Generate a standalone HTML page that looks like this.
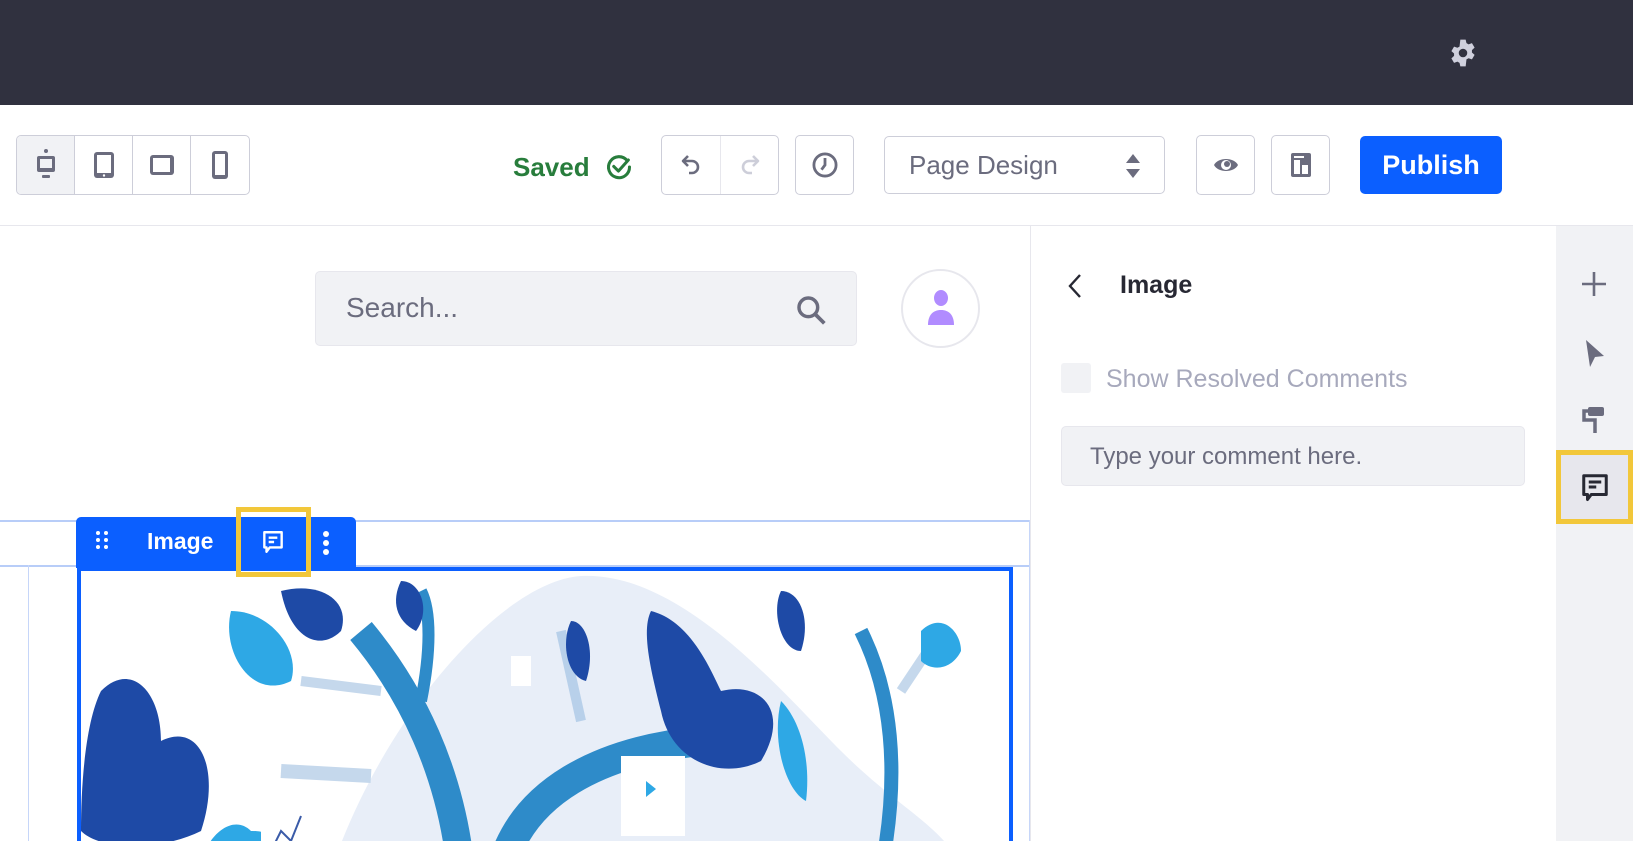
<!DOCTYPE html>
<html style="width:1633px;height:841px;overflow:hidden"><head><style>
*{box-sizing:border-box;margin:0;padding:0}
body{width:1633px;height:841px;overflow:hidden;background:#fff;font-family:"Liberation Sans",sans-serif;position:relative}
.a{position:absolute}
.top{left:0;top:0;width:1633px;height:105px;background:#30313f}
.btn{position:absolute;border:1px solid #cdced9;border-radius:5px;background:#fff;display:flex;align-items:center;justify-content:center}
svg{display:block}
</style></head><body>
<div class="a top"></div>
<svg class="a" style="left:1447px;top:37px" width="32" height="32" viewBox="0 0 24 24"><path fill="#cfd0dd" d="M10 2h4l.6 2.6 1.6.9 2.5-.9 2 3.4-2 1.8v1.8l2 1.8-2 3.4-2.5-.9-1.6.9L14 22h-4l-.6-2.6-1.6-.9-2.5.9-2-3.4 2-1.8v-1.8l-2-1.8 2-3.4 2.5.9 1.6-.9z"/><circle cx="12" cy="12" r="3.2" fill="#30313f"/></svg>

<div class="a" style="left:16px;top:135px;width:234px;height:60px;border:1px solid #cdced9;border-radius:5px;display:flex;overflow:hidden">
 <div style="width:58px;background:#f1f2f5;border-right:1px solid #cdced9;display:flex;align-items:center;justify-content:center"><svg width="24" height="34" viewBox="0 0 24 34"><circle cx="12" cy="3" r="2" fill="#6b6c7e"/><rect x="3" y="8" width="18" height="16" rx="2" fill="#6b6c7e"/><rect x="6" y="11" width="12" height="9" fill="#f1f2f5"/><rect x="8" y="27" width="8" height="3" rx="1" fill="#6b6c7e"/></svg></div>
 <div style="width:58px;border-right:1px solid #cdced9;display:flex;align-items:center;justify-content:center"><svg width="24" height="30" viewBox="0 0 24 30"><rect x="2" y="2" width="20" height="26" rx="3" fill="#6b6c7e"/><rect x="5" y="5" width="14" height="18" fill="#fff"/><circle cx="12" cy="25.5" r="1.2" fill="#fff"/></svg></div>
 <div style="width:58px;border-right:1px solid #cdced9;display:flex;align-items:center;justify-content:center"><svg width="28" height="24" viewBox="0 0 28 24"><rect x="2" y="2" width="24" height="20" rx="3" fill="#6b6c7e"/><rect x="5" y="5" width="17" height="14" fill="#fff"/></svg></div>
 <div style="flex:1;display:flex;align-items:center;justify-content:center"><svg width="20" height="30" viewBox="0 0 20 30"><rect x="2" y="1" width="16" height="28" rx="3" fill="#6b6c7e"/><rect x="5" y="4" width="10" height="21" fill="#fff"/></svg></div>
</div>

<div class="a" style="left:513px;top:152px;font-size:26px;font-weight:bold;color:#287d3c">Saved</div>
<svg class="a" style="left:605px;top:153px" width="28" height="28" viewBox="0 0 24 24"><path d="M19 6.5A9 9 0 1 0 21 12" fill="none" stroke="#287d3c" stroke-width="2.6" stroke-linecap="round"/><path d="M7.5 11.5l4 4L20 6" fill="none" stroke="#287d3c" stroke-width="2.6" stroke-linecap="round" stroke-linejoin="round"/></svg>

<div class="a" style="left:661px;top:135px;width:118px;height:60px;border:1px solid #cdced9;border-radius:5px;display:flex">
 <div style="width:59px;border-right:1px solid #e7e7ed;display:flex;align-items:center;justify-content:center"><svg width="22" height="24" viewBox="0 0 22 24"><path d="M8 3L3 8l5 5M3 8h9a6 6 0 0 1 0 12H9" fill="none" stroke="#6b6c7e" stroke-width="2.6" stroke-linejoin="round"/></svg></div>
 <div style="flex:1;display:flex;align-items:center;justify-content:center"><svg width="22" height="24" viewBox="0 0 22 24"><path d="M14 3l5 5-5 5M19 8h-9a6 6 0 0 0 0 12h3" fill="none" stroke="#cdced9" stroke-width="2.6" stroke-linejoin="round"/></svg></div>
</div>
<div class="btn" style="left:795px;top:135px;width:59px;height:60px"><svg width="28" height="28" viewBox="0 0 24 24"><circle cx="12" cy="12" r="9.5" fill="none" stroke="#6b6c7e" stroke-width="2.4"/><path d="M12 6v6l-3 4" fill="none" stroke="#6b6c7e" stroke-width="2.4"/></svg></div>
<div class="btn" style="left:884px;top:136px;width:281px;height:58px;justify-content:flex-start;padding-left:24px;font-size:26px;color:#6b6c7e">Page Design
 <svg class="a" style="left:240px;top:16px" width="16" height="26" viewBox="0 0 16 26"><path d="M8 1l7 9H1zM8 25l7-9H1z" fill="#6b6c7e"/></svg></div>
<div class="btn" style="left:1196px;top:135px;width:59px;height:60px"><svg width="28" height="22" viewBox="0 0 28 22"><path d="M2 11C6 3 22 3 26 11 22 19 6 19 2 11z" fill="#6b6c7e"/><circle cx="14" cy="11" r="5" fill="#fff"/><circle cx="15" cy="10" r="3" fill="#6b6c7e"/></svg></div>
<div class="btn" style="left:1271px;top:135px;width:59px;height:60px"><svg width="24" height="28" viewBox="0 0 24 28"><rect x="2" y="2" width="20" height="24" rx="2" fill="#6b6c7e"/><rect x="5" y="9" width="6" height="14" fill="#fff"/><rect x="13" y="14" width="6" height="9" fill="#fff"/><rect x="5" y="5" width="10" height="2" fill="#fff"/></svg></div>
<div class="a" style="left:1360px;top:136px;width:142px;height:58px;background:#0b5fff;border-radius:5px;color:#fff;font-size:27px;font-weight:bold;display:flex;align-items:center;justify-content:center">Publish</div>

<div class="a" style="left:0;top:225px;width:1633px;height:1px;background:#e7e7ed"></div>

<div class="a" style="left:315px;top:271px;width:542px;height:75px;background:#f1f2f5;border:1px solid #e7e7ed;border-radius:5px;font-size:28px;color:#6b6c7e;padding:20px 0 0 30px">Search...</div>
<svg class="a" style="left:795px;top:294px" width="32" height="32" viewBox="0 0 24 24"><circle cx="10" cy="10" r="7" fill="none" stroke="#6b6c7e" stroke-width="2.6"/><path d="M15 15l7 7" stroke="#6b6c7e" stroke-width="2.8"/></svg>
<div class="a" style="left:901px;top:269px;width:79px;height:79px;border-radius:50%;border:2px solid #e7e7ed;background:#fff"></div>
<svg class="a" style="left:925px;top:289px" width="32" height="40" viewBox="0 0 32 40"><ellipse cx="16" cy="9" rx="7" ry="8" fill="#b18cff"/><path d="M3 36c0-10 5-15 13-15s13 5 13 15z" fill="#b18cff"/></svg>

<div class="a" style="left:0;top:520px;width:1030px;height:2px;background:#b8cdf8"></div>
<div class="a" style="left:0;top:565px;width:1030px;height:2px;background:#b8cdf8"></div>
<div class="a" style="left:28px;top:565px;width:1px;height:276px;background:#c6d6f9"></div>
<div class="a" style="left:1029px;top:520px;width:1px;height:321px;background:#c6d6f9"></div>

<div class="a" style="left:77px;top:567px;width:936px;height:274px;border:4px solid #0b5fff;border-bottom:none;overflow:hidden;background:#fff">
<svg width="928" height="280" viewBox="0 0 928 280">
 <path d="M250 300C300 150 420 10 500 5 600 0 700 120 760 180 820 240 870 260 880 300z" fill="#e8eef8"/>
 <path d="M380 300C370 200 330 120 280 60" fill="none" stroke="#2e8bc9" stroke-width="28"/>
 <path d="M420 300C440 220 520 180 620 170" fill="none" stroke="#2e8bc9" stroke-width="30"/>
 <path d="M340 130C350 80 350 40 340 20" fill="none" stroke="#2e8bc9" stroke-width="12"/>
 <path d="M800 300C820 200 810 120 780 60" fill="none" stroke="#2e8bc9" stroke-width="14"/>
 <path d="M220 110l80 10" stroke="#c5d8ec" stroke-width="10"/>
 <path d="M200 200l90 5" stroke="#c5d8ec" stroke-width="14"/>
 <path d="M480 60l20 90" stroke="#b8d0ea" stroke-width="10"/>
 <path d="M820 120l40-60" stroke="#c5d8ec" stroke-width="10"/>
 <path d="M200 20c40-10 70 10 60 40-20 20-50 10-60-40z" fill="#1e4aa6"/>
 <path d="M320 10c20 0 30 30 15 50-20-10-25-30-15-50z" fill="#1e4aa6"/>
 <path d="M150 40c40 0 70 40 60 70-40 20-70-30-60-70z" fill="#2ea8e5"/>
 <path d="M20 120c30-30 60 0 60 50 40-20 60 30 40 90-40 20-100 20-120 0 0-50 5-110 20-140z" fill="#1e4aa6"/>
 <path d="M490 50c15 0 25 30 15 60-20-5-25-40-15-60z" fill="#1e4aa6"/>
 <path d="M570 40c40 10 60 60 70 80 40-10 70 20 40 70-40 20-90 0-100-50-10-40-20-80-10-100z" fill="#1e4aa6"/>
 <path d="M700 20c20 0 30 30 20 60-20 0-30-40-20-60z" fill="#1e4aa6"/>
 <path d="M840 60c20-20 40 0 40 20-10 20-30 20-40 10z" fill="#2ea8e5"/>
 <path d="M700 130c20 20 30 60 25 100-20-10-35-60-25-100z" fill="#2ea8e5"/>
 <path d="M120 300c0-30 30-60 50-40 10 0 30 0 40 40z" fill="#2ea8e5"/>
 <rect x="430" y="85" width="20" height="30" fill="#fff"/>
 <rect x="540" y="185" width="64" height="80" fill="#fff"/>
 <path d="M565 210l10 8-10 8z" fill="#2ea8e5"/>
 <rect x="180" y="210" width="38" height="90" fill="#fff"/>
 <path d="M190 280l10-20 10 10 10-25" fill="none" stroke="#3a5ba8" stroke-width="2"/>
</svg></div>

<div class="a" style="left:76px;top:517px;width:280px;height:51px;background:#0b5fff;border-radius:5px 5px 0 0"></div>
<svg class="a" style="left:95px;top:530px" width="14" height="20" viewBox="0 0 14 20"><g fill="#fff"><circle cx="3" cy="3" r="2"/><circle cx="11" cy="3" r="2"/><circle cx="3" cy="10" r="2"/><circle cx="11" cy="10" r="2"/><circle cx="3" cy="17" r="2"/><circle cx="11" cy="17" r="2"/></g></svg>
<div class="a" style="left:147px;top:528px;color:#fff;font-size:23px;font-weight:bold">Image</div>
<div class="a" style="left:236px;top:507px;width:75px;height:70px;border:5px solid #f2c73a"></div>
<svg class="a" style="left:260px;top:529px" width="26" height="26" viewBox="0 0 24 24"><path d="M4 3h16v14H9l-3 4v-4H4z" fill="none" stroke="#fff" stroke-width="2.2" stroke-linejoin="round"/><path d="M8 8h8M8 12h5" stroke="#fff" stroke-width="2.2"/></svg>
<svg class="a" style="left:321px;top:530px" width="10" height="26" viewBox="0 0 10 26"><g fill="#fff"><circle cx="5" cy="4" r="3"/><circle cx="5" cy="13" r="3"/><circle cx="5" cy="22" r="3"/></g></svg>

<div class="a" style="left:1030px;top:226px;width:1px;height:615px;background:#e7e7ed"></div>
<svg class="a" style="left:1066px;top:272px" width="18" height="28" viewBox="0 0 18 28"><path d="M14 3L4 14l10 11" fill="none" stroke="#272833" stroke-width="2.4"/></svg>
<div class="a" style="left:1120px;top:271px;font-size:25px;font-weight:bold;color:#272833">Image</div>
<div class="a" style="left:1061px;top:363px;width:30px;height:30px;background:#f1f2f5;border-radius:3px"></div>
<div class="a" style="left:1106px;top:365px;font-size:25px;color:#a7a9bc">Show Resolved Comments</div>
<div class="a" style="left:1061px;top:426px;width:464px;height:60px;background:#f1f2f5;border:1px solid #e7e7ed;border-radius:5px;font-size:24px;color:#6b6c7e;padding:16px 0 0 28px">Type your comment here.</div>

<div class="a" style="left:1556px;top:226px;width:77px;height:615px;background:#f1f2f5"></div>
<svg class="a" style="left:1580px;top:270px" width="28" height="28" viewBox="0 0 28 28"><path d="M14 2v24M2 14h24" stroke="#6b6c7e" stroke-width="2.6"/></svg>
<svg class="a" style="left:1584px;top:338px" width="22" height="30" viewBox="0 0 22 30"><path d="M2 2l18 16-9 1-5 10z" fill="#6b6c7e"/></svg>
<svg class="a" style="left:1582px;top:405px" width="24" height="30" viewBox="0 0 24 30"><rect x="6" y="2" width="16" height="9" rx="2" fill="#6b6c7e"/><path d="M6 6H2v9h11v13" fill="none" stroke="#6b6c7e" stroke-width="3.5"/></svg>
<div class="a" style="left:1556px;top:450px;width:77px;height:74px;border:5px solid #f2c73a;background:#e7e7ed"></div>
<svg class="a" style="left:1580px;top:472px" width="30" height="30" viewBox="0 0 24 24"><path d="M3 3h18v15H9l-3 4v-4H3z" fill="none" stroke="#272833" stroke-width="2.4" stroke-linejoin="round"/><path d="M7 8h10M7 12h6" stroke="#272833" stroke-width="2.4"/></svg>
</body></html>
